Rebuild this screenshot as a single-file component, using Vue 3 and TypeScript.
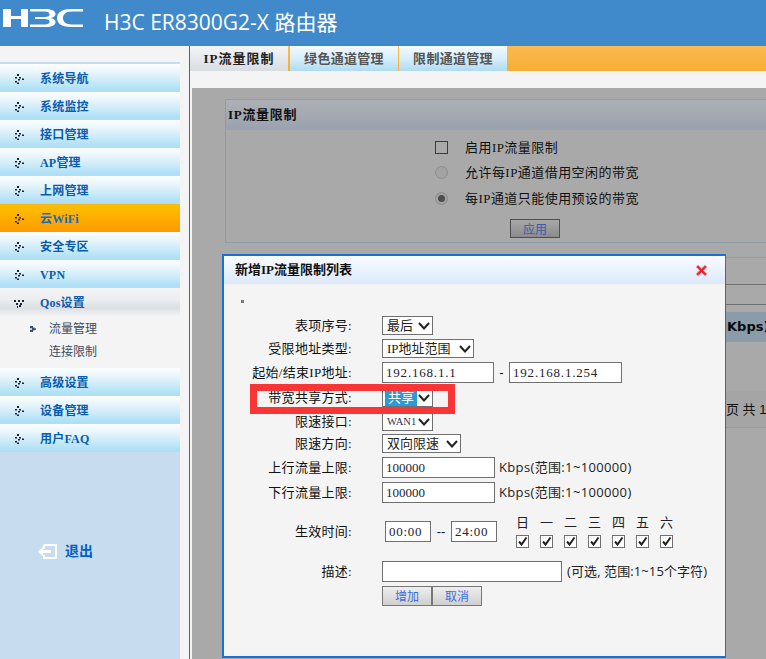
<script setup lang="ts">
interface NavItem { label: string; state?: 'active' | 'open' }
const navTop: NavItem[] = [
  { label: '系统导航' }, { label: '系统监控' }, { label: '接口管理' }, { label: 'AP管理' },
  { label: '上网管理' }, { label: '云WiFi', state: 'active' }, { label: '安全专区' }, { label: 'VPN' },
  { label: 'Qos设置', state: 'open' },
]
const navBottom: NavItem[] = [{ label: '高级设置' }, { label: '设备管理' }, { label: '用户FAQ' }]
const week = ['日', '一', '二', '三', '四', '五', '六']
</script>

<template>
  <div class="page">
    <header class="topbar">
      <svg class="logo" width="81" height="19" viewBox="0 0 81 19">
        <path fill="#fff" d="M0 0h8v7h10V0h7v18h-7v-8H8v8H0z" />
        <path fill="#fff" d="M27 0H42C50 0 52.500 2.500 52.500 5C52.500 7 50.500 8.500 47.500 9C50.500 9.500 52.500 11 52.500 13C52.500 16 49.500 18 42 18H27V15.500H41C45 15.500 46.500 14.500 46.500 12.500C46.500 11 45 10 41 10H32V8H41C45 8 46.500 7 46.500 5.500C46.500 3.500 45 2.500 41 2.500H27z" />
        <path fill="#fff" d="M80 0H68C58 0 54 4 54 9C54 14 58 18 68 18H80V15.500H69C62 15.500 60 12 60 9C60 6 62 2.500 69 2.500H80z" />
      </svg>
      <h1 class="title">H3C ER8300G2-X 路由器</h1>
    </header>

    <div class="body">
      <aside class="sidebar">
        <div class="strip"></div>
        <nav>
          <a v-for="item in navTop" :key="item.label" class="nav" :class="item.state">
            <svg v-if="item.state === 'open'" class="dots" width="11" height="8" viewBox="0 0 11 8">
              <path fill="#1a2438" d="M0 0h2v2H0zM4 0h2v2H4zM8 0h2v2H8zM2 3h2v2H2zM6 3h2v2H6zM5 5h2v2H5zM3 6h1v2H3z" />
            </svg>
            <svg v-else class="dots" width="9" height="10" viewBox="0 0 9 10">
              <path fill="#1a2438" d="M2 0h2v2H2zM0 3h2v1.500H0zM4 3h2v1.500H4zM7 4.500h2V6H7zM3 5h2v1.500H3zM0 7h2v1.500H0zM2 8.500h2V10H2z" />
            </svg>
            <span>{{ item.label }}</span>
          </a>
          <div class="subnav">
            <a class="sub current">
              <svg width="6" height="6" viewBox="0 0 6 6"><path fill="#3e4f68" d="M0 0h3v1.500h1.500V2.300H6v1.400H4.500v.8H3V6H0V3.700h2V2.300H0z" /></svg>
              <span>流量管理</span>
            </a>
            <a class="sub"><span>连接限制</span></a>
          </div>
          <a v-for="item in navBottom" :key="item.label" class="nav">
            <svg class="dots" width="9" height="10" viewBox="0 0 9 10">
              <path fill="#1a2438" d="M2 0h2v2H2zM0 3h2v1.500H0zM4 3h2v1.500H4zM7 4.500h2V6H7zM3 5h2v1.500H3zM0 7h2v1.500H0zM2 8.500h2V10H2z" />
            </svg>
            <span>{{ item.label }}</span>
          </a>
        </nav>
        <div class="logout-area">
          <a class="logout">
            <svg width="19" height="16" viewBox="0 0 19 16">
              <path fill="none" stroke="#fff" stroke-width="2" d="M6 1h12v13H6v-3M6 5V1" />
              <path fill="#fff" d="M0 7.500 5 3v3h8v3H5v3z" />
            </svg>
            <span>退出</span>
          </a>
        </div>
      </aside>

      <main class="main">
        <div class="tabs">
          <a class="tab current">IP流量限制</a>
          <a class="tab second">绿色通道管理</a>
          <a class="tab third">限制通道管理</a>
        </div>
        <div class="sheet">
          <div class="mask">
            <section class="panel">
              <h2 class="panel-head">IP流量限制</h2>
              <div class="panel-body">
                <label class="opt"><i class="box"></i>启用IP流量限制</label>
                <label class="opt"><i class="radio"></i>允许每IP通道借用空闲的带宽</label>
                <label class="opt tall"><i class="radio on"></i>每IP通道只能使用预设的带宽</label>
                <button class="apply" type="button">应用</button>
              </div>
            </section>
            <section class="listing">
              <div class="l-top"></div>
              <div class="l-tool"></div>
              <div class="l-pad"></div>
              <div class="l-th">Kbps)</div>
              <div class="l-row"></div>
              <div class="l-pager">页 共 1</div>
            </section>
          </div>
        </div>
      </main>
    </div>

    <div class="modal">
      <div class="m-head">
        <span>新增IP流量限制列表</span>
        <svg class="close" width="11" height="11" viewBox="0 0 11 11">
          <path stroke="#f4a9ab" stroke-width="3.600" stroke-linecap="square" d="M2 2l7 7M9 2l-7 7" />
          <path stroke="#e8202a" stroke-width="2" stroke-linecap="square" d="M2 2l7 7M9 2l-7 7" />
        </svg>
      </div>
      <div class="m-body">
        <i class="mark"></i>
        <div class="row"><label>表项序号:</label>
          <div class="sel w51"><span>最后</span><svg width="12" height="8" viewBox="0 0 12 8"><path d="M1 1l5 5.500L11 1" /></svg></div>
        </div>
        <div class="row"><label>受限地址类型:</label>
          <div class="sel w92"><span>IP地址范围</span><svg width="12" height="8" viewBox="0 0 12 8"><path d="M1 1l5 5.500L11 1" /></svg></div>
        </div>
        <div class="row gap5"><label>起始/结束IP地址:</label>
          <input class="txt ip w112" value="192.168.1.1" />
          <span class="dash">-</span>
          <input class="txt ip w113" value="192.168.1.254" />
        </div>
        <div class="row gap5"><label>带宽共享方式:</label>
          <div class="sel w51"><span class="picked">共享</span><svg width="12" height="8" viewBox="0 0 12 8"><path d="M1 1l5 5.500L11 1" /></svg></div>
        </div>
        <div class="row gap3"><label>限速接口:</label>
          <div class="sel w51"><span class="wan">WAN1</span><svg width="12" height="8" viewBox="0 0 12 8"><path d="M1 1l5 5.500L11 1" /></svg></div>
        </div>
        <div class="row"><label>限速方向:</label>
          <div class="sel w79"><span>双向限速</span><svg width="12" height="8" viewBox="0 0 12 8"><path d="M1 1l5 5.500L11 1" /></svg></div>
        </div>
        <div class="row"><label>上行流量上限:</label>
          <input class="txt w113" value="100000" />
          <span class="note">Kbps(范围:1~100000)</span>
        </div>
        <div class="row gap12"><label>下行流量上限:</label>
          <input class="txt w113" value="100000" />
          <span class="note">Kbps(范围:1~100000)</span>
        </div>
        <div class="row gap13"><label>生效时间:</label>
          <input class="txt time first" value="00:00" />
          <span class="dash2">--</span>
          <input class="txt time" value="24:00" />
          <div class="week">
            <div v-for="d in week" :key="d" class="day">
              <span>{{ d }}</span>
              <i class="check"><svg width="11" height="11" viewBox="0 0 11 11"><path d="M2 5.500l2.500 3L9.500 1.500" /></svg></i>
            </div>
          </div>
        </div>
        <div class="row"><label>描述:</label>
          <input class="txt w180" value="" />
          <span class="note small">(可选, 范围:1~15个字符)</span>
        </div>
        <div class="row"><label></label>
          <button class="btn" type="button">增加</button>
          <button class="btn" type="button">取消</button>
        </div>
      </div>
      <div class="redbox"></div>
    </div>
  </div>
</template>

<style>
html, body { margin: 0; padding: 0; background: #f4f4f4; }
</style>

<style scoped>
.page {
  position: relative; width: 100%; height: 100vh; overflow: hidden; display: flex; flex-direction: column;
  background: #f4f4f4; color: #111; font: 13px/1.2 "Liberation Serif", "Noto Sans CJK SC", serif;
}
.topbar { height: 46px; flex: none; background: #4089ca; display: flex; align-items: flex-start; }
.logo { margin: 9px 0 0 3px; flex: none; }
.title {
  margin: 7px 0 0 20px; font: 400 21px/30px "Open Sans", "Noto Sans CJK SC", sans-serif; color: #fff; white-space: nowrap;
}
.body { flex: 1; display: flex; min-height: 0; }

.sidebar { width: 180px; flex: none; padding-top: 16px; display: flex; flex-direction: column; box-sizing: border-box; }
.strip { height: 2px; background: #c8dcf0; }
.nav {
  height: 28px; display: flex; align-items: center; position: relative; padding: 3px 0 0 40px; box-sizing: border-box;
  background: linear-gradient(#fdfeff 0%, #e4f4fb 35%, #b0e0f5 90%, #aedff5 100%);
  color: #0a5cb0; font-weight: 700; font-size: 12px; line-height: 25px; letter-spacing: .2px;
}
.nav .dots { position: absolute; left: 15px; top: 10px; }
.nav.active { background: linear-gradient(#f3ad28 0, #fcc000 4%, #ff9a00 100%); color: #1669c0; }
.nav.open { background: linear-gradient(#f4f4f4 0%, #eceef1 40%, #dcdfe3 72%, #f3f3f3 100%); color: #0f5cad; }
.nav.open .dots { left: 14px; top: 12px; }
.subnav { height: 52px; box-sizing: border-box; padding-top: 2px; }
.sub { height: 23px; display: flex; align-items: center; position: relative; padding-left: 49px; font-size: 12px; color: #3c4c60; line-height: 23px; }
.sub svg { position: absolute; left: 30px; top: 8px; }
.logout-area { flex: 1; background: #c8dcf0; padding: 90px 0 0 38px; }
.logout { display: flex; align-items: center; gap: 8px; color: #0060c8; font-weight: 700; font-size: 14px; line-height: 20px; }

.main { flex: 1; min-width: 0; margin-left: 9px; border-left: 1px solid #1a6fd0; display: flex; flex-direction: column; }
.tabs { height: 25px; flex: none; display: flex; background: linear-gradient(#f9bb52, #f7ae33); }
.tab {
  display: flex; align-items: center; justify-content: center; box-sizing: border-box; height: 25px;
  font: 700 13px/25px "Liberation Serif", "Noto Sans CJK SC", serif; color: #555; letter-spacing: .3px;
  background: linear-gradient(#f4fafe 0%, #d6eef9 50%, #aedcf2 100%);
}
.tab.current { width: 98px; color: #222; letter-spacing: 1px; background: linear-gradient(#f4f5f6, #d8dde2); }
.tab.second { width: 108px; margin-left: 2px; }
.tab.third { width: 108px; margin-left: 1px; }

.sheet { flex: 1; min-height: 0; padding: 17px 0 0 2px; display: flex; }
.mask { flex: 1; min-width: 0; overflow: hidden; background: #a9a9a9; padding-top: 11px; }
.panel { margin-left: 33px; border: 1px solid #8b9cab; border-right: 0; }
.panel-head {
  margin: 0; height: 30px; padding-left: 2px; background: linear-gradient(#adb0b4, #9aa2b0);
  font: 700 13px/30px "Liberation Serif", "Noto Sans CJK SC", serif; color: #111; letter-spacing: .7px;
}
.panel-body { padding: 5px 0 4px 209px; }
.opt { display: flex; align-items: center; height: 25px; white-space: nowrap; color: #111; line-height: 25px; letter-spacing: .45px; }
.opt.tall { height: 26px; }
.box { width: 11px; height: 11px; border: 1px solid #3c3c3c; margin-right: 17px; flex: none; }
.radio {
  width: 11px; height: 11px; border: 1px solid #8c8c8c; border-radius: 50%; margin-right: 17px; flex: none; background: #a3a3a3; position: relative;
}
.radio.on::after { content: ""; position: absolute; left: 2px; top: 2px; width: 7px; height: 7px; border-radius: 50%; background: #4c4c4c; }
.apply {
  display: block; width: 50px; height: 19px; margin: 8px 0 0 75px; padding: 0; box-sizing: border-box;
  border: 1px solid #4f4f4f; background: linear-gradient(#a8a8a8, #8b8b8b); color: #3d5aa8;
  font: 12px/17px "Noto Sans CJK SC", sans-serif;
}
.listing { margin: 14px 0 0 33px; }
.l-top { height: 26px; border-top: 1px solid #8b9cab; }
.l-tool { height: 19px; border-top: 1px solid #6e6e6e; }
.l-pad { height: 7px; border-top: 1px solid #6e6e6e; }
.l-th { height: 30px; background: #8a9baa; padding-left: 502px; white-space: nowrap; font: 700 13px/30px "DejaVu Sans", sans-serif; color: #0a0a0a; }
.l-row { height: 49px; }
.l-pager {
  height: 36px; background: #a5a5a5; border-bottom: 1px solid #8b9cab; padding-left: 501px; white-space: nowrap;
  font: 13px/38px "Liberation Sans", "Noto Sans CJK SC", sans-serif; color: #111;
}

.modal {
  position: absolute; left: 222px; top: 254px; width: 504px; height: 404px; box-sizing: border-box;
  border: 2px solid #1a6fd8; border-right-width: 1px; background: #f4f4f4;
}
.m-head {
  height: 28px; display: flex; align-items: center; justify-content: space-between; padding: 0 18px 0 11px;
  background: linear-gradient(#f9fbff, #dce9fb); font-weight: 700; font-size: 13px; color: #111;
}
.close { fill: none; }
.m-body { padding-top: 16px; }
.mark { display: block; width: 3px; height: 3px; margin: 0 0 13px 17px; background: #777; }
.row { display: flex; align-items: center; min-height: 19px; margin-bottom: 4px; white-space: nowrap; }
.gap3 { margin-bottom: 3px; }
.gap5 { margin-bottom: 5px; }
.gap12 { margin-bottom: 12px; }
.gap13 { margin-bottom: 13px; }
.row > label { width: 128px; margin-right: 30px; flex: none; text-align: right; color: #111; line-height: 19px; letter-spacing: .3px; }
.sel {
  height: 19px; box-sizing: border-box; border: 1px solid #707070; background: #fff; display: flex; align-items: center;
  justify-content: space-between; padding: 0 2px 0 4px; color: #222; line-height: 17px; letter-spacing: 0; flex: none;
}
.sel svg { fill: none; stroke: #222; stroke-width: 2; flex: none; }
.sel .picked { background: #2a9ad8; color: #fff; margin-left: -2px; padding: 0 3px; width: 26px; }
.sel .wan { font-size: 10.500px; color: #334; }
.w51 { width: 51px; }
.w79 { width: 79px; }
.w92 { width: 92px; }
.txt {
  height: 21px; box-sizing: border-box; border: 1px solid #707070; background: #fff; padding: 0 3px; margin: 0;
  font: 13px/19px "Liberation Serif", "Noto Sans CJK SC", serif; color: #223; flex: none; outline: 0; border-radius: 0;
}
.txt.ip { letter-spacing: .8px; }
.w112 { width: 112px; }
.w113 { width: 113px; }
.w180 { width: 180px; }
.dash { width: 15px; text-align: center; font-family: "Liberation Sans", sans-serif; }
.note { margin-left: 4px; font: 13px/19px "Open Sans", "Noto Sans CJK SC", sans-serif; color: #222; letter-spacing: .35px; }
.note.small { margin-left: 5px; letter-spacing: .1px; }
.time { width: 46px; letter-spacing: .7px; padding: 0 3px; }
.time.first { margin-left: 3px; }
.dash2 { width: 20px; text-align: center; font-family: "Liberation Sans", sans-serif; }
.week { display: flex; gap: 11px; margin-left: 19px; }
.day { width: 13px; display: flex; flex-direction: column; align-items: center; gap: 7px; font-family: "Noto Sans CJK SC", sans-serif; line-height: 13px; color: #222; }
.check { display: flex; align-items: center; justify-content: center; width: 13px; height: 13px; box-sizing: border-box; border: 1px solid #707070; background: #fff; }
.check svg { fill: none; stroke: #222; stroke-width: 2; }
.btn {
  width: 50px; height: 20px; padding: 0; box-sizing: border-box; border: 1px solid #777;
  background: linear-gradient(#eeeeee, #cfcfcf); color: #3a6fe0; font: 12px/18px "Noto Sans CJK SC", sans-serif;
}
.redbox { position: absolute; left: 26px; top: 128px; width: 205px; height: 30px; box-sizing: border-box; border: 7px solid #f93535; }
</style>
